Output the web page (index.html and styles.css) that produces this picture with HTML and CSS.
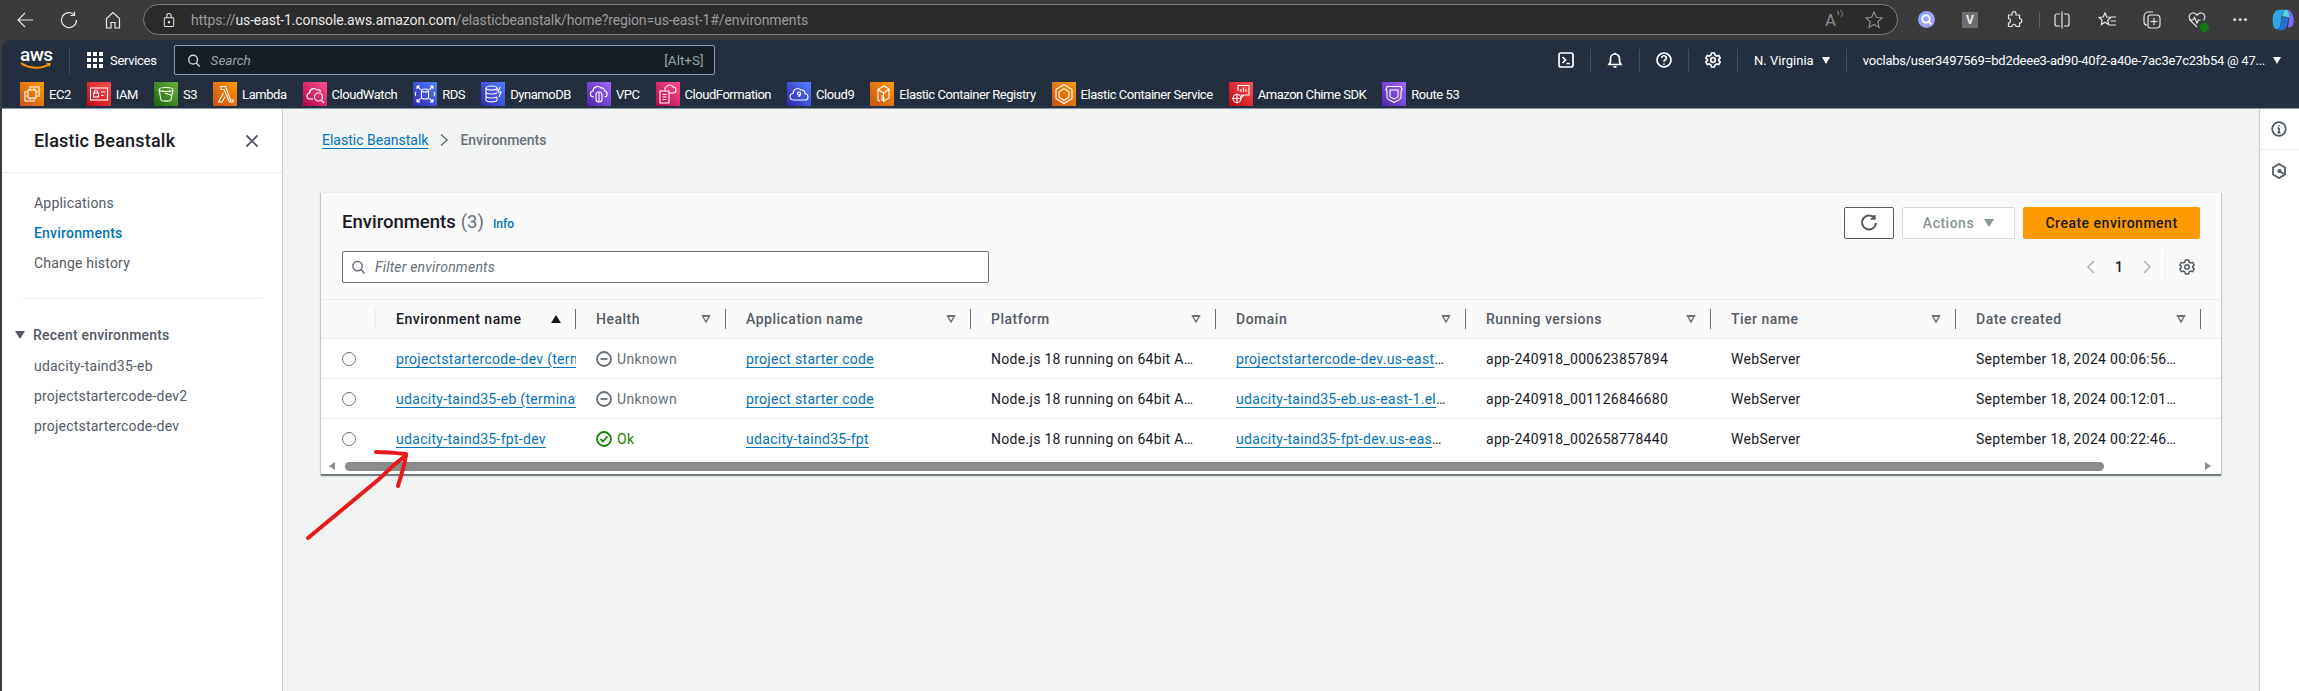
FILE: index.html
```html
<!DOCTYPE html>
<html lang="en">
<head>
  <meta charset="UTF-8">
  <title>Environments | Elastic Beanstalk</title>
  <link rel="stylesheet" href="styles.css">
</head>
<body>
  <!-- browser toolbar -->
  <div class="browser-bar">
    <div class="browser-nav">
      <svg class="b-icon" viewBox="0 0 20 20"><path d="M18 10H3M10 3l-7 7 7 7"/></svg>
      <svg class="b-icon" viewBox="0 0 20 20"><path d="M15.500 5A7.500 7.500 0 1 0 17.500 10M15.500 1.500V5.500H11.500"/></svg>
      <svg class="b-icon" viewBox="0 0 20 20"><path d="M10 2.500 3.500 8.500V18H8v-5.500h4V18h4.500V8.500z"/></svg>
    </div>
    <div class="address-bar">
      <svg class="lock" viewBox="0 0 14 18"><rect x="1.500" y="6.500" width="11" height="10" rx="1"/><path d="M4.500 6.500V4a2.500 2.500 0 0 1 5 0v2.500"/><circle cx="7" cy="11.500" r=".8"/></svg>
      <div class="url">https://<span class="url-host">us-east-1.console.aws.amazon.com</span>/elasticbeanstalk/home?region=us-east-1#/environments</div>
      <span class="read-aloud">A<svg viewBox="0 0 8 10"><path d="M1 1c2 1 2 3 1 4M4 0c3 2 3 5 1 7"/></svg></span>
      <svg class="b-icon dim" viewBox="0 0 20 20"><path d="m10 2 2.400 5.300 5.600.6-4.200 3.800 1.200 5.700L10 14.500l-5 2.900 1.200-5.700L2 7.900l5.600-.6z"/></svg>
    </div>
    <div class="browser-tools">
      <span class="ext-q"><svg viewBox="0 0 16 16"><circle cx="7.500" cy="7.500" r="3.500"/><path d="m10 10 2.500 2.500"/></svg></span>
      <span class="ext-v">V</span>
      <svg class="b-icon" viewBox="0 0 20 20"><path d="M8 3.500c0-2.500 4-2.500 4 0V5h3.500v3.500c3 0 3 4.500 0 4.500v3.500H12c0-3-4-3-4 0H4.500V13c2.500 0 2.500-4.500 0-4.500V5H8z"/></svg>
      <span class="tool-sep"></span>
      <svg class="b-icon" viewBox="0 0 20 20"><path d="M10 1.500v17M8 4H5a2 2 0 0 0-2 2v8a2 2 0 0 0 2 2h3M12 4h3a2 2 0 0 1 2 2v8a2 2 0 0 1-2 2h-3"/></svg>
      <svg class="b-icon" viewBox="0 0 20 20"><path d="m8 3 1.800 4 4 .5-3 2.700.8 4.300L8 12.300 4.400 14.500l.8-4.300-3-2.700 4-.5zM14 7h5M13.500 11H19M12 15h7"/></svg>
      <svg class="b-icon" viewBox="0 0 20 20"><path d="M5 15c-2 0-3-1-3-3V6.500C2 4 4 2 6.500 2H11M6 7.500C6 6 7 5 8.500 5h6C16.500 5 18 6.500 18 8.500v6c0 2-1.500 3.500-3.500 3.500h-6C7 18 6 17 6 15.500zM12 8v7M8.500 11.500h7"/></svg>
      <span class="health">
        <svg class="b-icon" viewBox="0 0 20 20"><path d="M10 17 3.500 10.500C1 8 2 3.500 5.500 3c2-.3 3.500.8 4.500 2.200C11 3.800 12.500 2.700 14.500 3 18 3.500 19 8 16.500 10.500M2 10h4l1.500-2.500L10 13l1.500-3h2"/></svg>
        <span class="health-dot"></span>
      </span>
      <span class="dots">···</span>
      <svg class="copilot" viewBox="0 0 28 28">
        <path d="M3 11c.5-4 3-8 7-8h8c-3 1-5 3-5.500 7L11 20c-.5 3-2.500 4-5 4-2.500-2-3.500-8-3-13z" fill="#2aa8e8"/>
        <path d="M18 3c5 0 7.500 6 7.500 11 0 5-1.500 8-5 8h-1l1-10c.3-3-1-7-2.500-9z" fill="#7a6df0"/>
        <path d="M13 11h7l-1.500 9c-.5 3-3 5-6 5H6c3-.5 5-2.500 5.500-6z" fill="#1f6fd8"/>
        <path d="M13 10c.5-3 2.500-7 5-7 2 2 3 5 2.500 8z" fill="#4fd6e0"/>
      </svg>
    </div>
  </div>

  <!-- aws console navigation -->
  <header class="aws-nav">
    <div class="nav-top">
      <div class="aws-logo">
        <span>aws</span>
        <svg viewBox="0 0 32 8"><path d="M1 1c8 6 20 6 28 1.500" fill="none" stroke="#f90" stroke-width="2"/><path d="M26 1h5l-1.500 4z" fill="#f90"/></svg>
      </div>
      <div class="services">
        <span class="grid-dots"><i></i><i></i><i></i><i></i><i></i><i></i><i></i><i></i><i></i></span>
        Services
      </div>
      <div class="nav-search">
        <svg viewBox="0 0 16 16"><circle cx="7" cy="7" r="5"/><path d="m10.500 10.500 4 4.500"/></svg>
        <em>Search</em>
        <span>[Alt+S]</span>
      </div>
      <div class="nav-right">
        <svg class="nav-icon" viewBox="0 0 16 16"><rect x="1" y="1" width="14" height="14" rx="2"/><path d="m4.500 5 3 3-3 3M8.500 11.500H12"/></svg>
        <span class="nav-sep"></span>
        <svg class="nav-icon" viewBox="0 0 16 16"><path d="M2 12.500h12L12.500 10V6.500a4.500 4.500 0 0 0-9 0V10zM8 .8V2M6.500 14.800h3"/></svg>
        <span class="nav-sep"></span>
        <svg class="nav-icon" viewBox="0 0 16 16"><circle cx="8" cy="8" r="7"/><path d="M5.800 6c0-3 4.500-3 4.500 0 0 1.800-2.300 1.700-2.300 3.800M8 11.500v1.200"/></svg>
        <span class="nav-sep"></span>
        <svg class="nav-icon" viewBox="0 0 16 16"><path d="M6.500 1h3l.5 2 1.700 1 2-.6 1.500 2.600-1.500 1.400v1.200l1.500 1.400-1.500 2.600-2-.6-1.700 1-.5 2h-3l-.5-2-1.700-1-2 .6L.8 10 2.300 8.600V7.400L.8 6l1.500-2.600 2 .6 1.700-1z"/><circle cx="8" cy="8" r="2.300"/></svg>
        <span class="nav-sep"></span>
        <span class="nav-menu">N. Virginia <i class="caret"></i></span>
        <span class="nav-sep"></span>
        <span class="nav-menu nav-user">voclabs/user3497569=bd2deee3-ad90-40f2-a40e-7ac3e7c23b54 @ 47... <i class="caret"></i></span>
      </div>
    </div>
    <div class="shortcuts">
      <a class="shortcut"><span class="svc orange"><svg viewBox="0 0 24 24"><rect x="8" y="8" width="8" height="8"/><path d="M10 6v2M14 6v2M10 16v2M14 16v2M6 10h2M6 14h2M16 10h2M16 14h2M9 5h10v10M5 9v10h10"/></svg></span>EC2</a>
      <a class="shortcut"><span class="svc red"><svg viewBox="0 0 24 24"><rect x="3.500" y="6" width="17" height="12"/><rect x="6.500" y="11" width="5" height="4"/><path d="M7.500 11V9.500a1.500 1.500 0 0 1 3 0V11M14 10h4M14 13.500h2.500"/></svg></span>IAM</a>
      <a class="shortcut"><span class="svc green"><svg viewBox="0 0 24 24"><ellipse cx="12" cy="7.500" rx="7" ry="2"/><path d="M5 7.500 7 18c.3 1.500 9.700 1.500 10 0l2-10.500M11 11l7 2.500"/></svg></span>S3</a>
      <a class="shortcut"><span class="svc orange"><svg viewBox="0 0 24 24"><path d="M8 4.500h4.500l5 13.500H20v2h-3.500L11 7.500H8zM10.500 11 5.500 20H9l3.200-5.500"/></svg></span>Lambda</a>
      <a class="shortcut"><span class="svc pink"><svg viewBox="0 0 24 24"><path d="M10 17H7c-4 0-4-5.500-.5-6 0-4 5-6 7.500-3 1.500-.8 3.500 0 3.500 2M18.500 18.500 21 21"/><circle cx="15.500" cy="15" r="4"/></svg></span>CloudWatch</a>
      <a class="shortcut"><span class="svc blue"><svg viewBox="0 0 24 24"><path d="M4 4l3.500 3.500M20 4l-3.500 3.500M4 20l3.500-3.500M20 20l-3.500-3.500M4 4h3M4 4v3M20 4h-3M20 4v3M4 20h3M4 20v-3M20 20h-3M20 20v-3M3 10c-1 1-1 3 0 4M21 10c1 1 1 3 0 4"/><ellipse cx="12" cy="8.500" rx="3.500" ry="1.500"/><path d="M8.500 8.500v7c0 2 7 2 7 0v-7"/></svg></span>RDS</a>
      <a class="shortcut"><span class="svc blue"><svg viewBox="0 0 24 24"><ellipse cx="10.500" cy="6" rx="5.500" ry="2"/><path d="M5 6v12c0 2.500 11 2.500 11 0v-3M5 10c0 2.500 9 2.500 11 1M5 14c0 2.500 9 2.500 11 1M16 6v3M19 5l-2 5h3l-2 5"/></svg></span>DynamoDB</a>
      <a class="shortcut"><span class="svc purple"><svg viewBox="0 0 24 24"><path d="M7 15c-4.500 0-4.500-5.500-1-6 0-4 5-6 8-3 2-.5 3.500 1 3.500 3 3.500 0 3.500 6 0 6"/><rect x="9" y="10" width="6" height="10" rx="3"/><path d="M12 10v10"/></svg></span>VPC</a>
      <a class="shortcut"><span class="svc pink"><svg viewBox="0 0 24 24"><path d="M4 9h9v12H4zM6.500 12.500h4M6.500 15h4M6.500 17.500h4M9 9V6.500c0-1 1-2 2-2 1-2 5-2 6 .5 2 0 3 1.500 3 3s-1 3-3 3h-4"/></svg></span>CloudFormation</a>
      <a class="shortcut"><span class="svc blue"><svg viewBox="0 0 24 24"><path d="M7 18c-5 0-5-6-1-6.500C6 7 11 5 14 8c3 0 4 1.500 4 3.500 4 .5 4 6.500 0 6.500z"/><circle cx="12" cy="11.500" r="1.500"/><path d="M13.500 11.500c0 2-1 3-2.500 3"/></svg></span>Cloud9</a>
      <a class="shortcut"><span class="svc orange"><svg viewBox="0 0 24 24"><path d="M8 7.500 14 4l5 3v9l-5.500 3.500V11zM8 7.500l5.500 3.500M14 11l5-4M8 7.500V18l2 1.500M12 13v5l3-1.500"/></svg></span>Elastic Container Registry</a>
      <a class="shortcut"><span class="svc orange"><svg viewBox="0 0 24 24"><path d="m12 2.500 8 5v9l-8 5-8-5v-9z"/><path d="m12 6.500 5 3.500v5l-5 3.500L7 15v-5z"/></svg></span>Elastic Container Service</a>
      <a class="shortcut"><span class="svc red"><svg viewBox="0 0 24 24"><path d="M9 9V3.500h11V13h-5l-2 2v-2h-1M12 10V7M14.500 10V5.500M17 10V7"/><circle cx="8" cy="16.500" r="4"/><path d="M3 16.500h10M8 11.500v10"/></svg></span>Amazon Chime SDK</a>
      <a class="shortcut"><span class="svc purple"><svg viewBox="0 0 24 24"><path d="M5 4.500h14l1 3-1 2v6c0 2-4 3-7 5-3-2-7-3-7-5v-6l-1-2z"/><path d="M8 8h8v7l-4 2-4-2z"/></svg></span>Route 53</a>
    </div>
  </header>

  <div class="workspace">
    <nav class="side-nav">
      <div class="side-head">
        <h2>Elastic Beanstalk</h2>
        <svg class="close" viewBox="0 0 14 14"><path d="m1.500 1.500 11 11M12.500 1.500l-11 11"/></svg>
      </div>
      <ul class="side-links">
        <li>Applications</li>
        <li class="active">Environments</li>
        <li>Change history</li>
      </ul>
      <hr class="side-rule">
      <div class="recent-head"><i class="recent-caret"></i>Recent environments</div>
      <ul class="side-links recent-links">
        <li>udacity-taind35-eb</li>
        <li>projectstartercode-dev2</li>
        <li>projectstartercode-dev</li>
      </ul>
    </nav>

    <main class="main">
      <div class="breadcrumb">
        <a>Elastic Beanstalk</a>
        <svg viewBox="0 0 10 14"><path d="m2 1.500 6 5.500-6 5.500"/></svg>
        <span>Environments</span>
      </div>

      <section class="card">
        <div class="card-head">
          <div class="card-title">
            <h1>Environments</h1><span class="count">(3)</span><a class="info">Info</a>
          </div>
          <div class="card-actions">
            <button class="btn btn-icon"><svg viewBox="0 0 16 16"><path d="M12.800 3.500A6.200 6.200 0 1 0 14.200 8M13 .8v3.400H9.600"/></svg></button>
            <button class="btn btn-disabled">Actions <i class="caret"></i></button>
            <button class="btn btn-primary">Create environment</button>
          </div>
        </div>
        <div class="card-filter">
          <div class="filter-box">
            <svg viewBox="0 0 16 16"><circle cx="7" cy="7" r="5"/><path d="m10.500 10.500 4 4.500"/></svg>
            <em>Filter environments</em>
          </div>
          <div class="pager">
            <svg class="pager-arrow" viewBox="0 0 10 14"><path d="M8 1 2 7l6 6"/></svg>
            <b>1</b>
            <svg class="pager-arrow" viewBox="0 0 10 14"><path d="m2 1 6 6-6 6"/></svg>
            <span class="pager-sep"></span>
            <svg class="pager-gear" viewBox="0 0 16 16"><path d="M6.500 1h3l.5 2 1.700 1 2-.6 1.500 2.600-1.500 1.400v1.200l1.500 1.400-1.500 2.600-2-.6-1.700 1-.5 2h-3l-.5-2-1.700-1-2 .6L.8 10 2.300 8.600V7.400L.8 6l1.500-2.600 2 .6 1.700-1z"/><circle cx="8" cy="8" r="2.300"/></svg>
          </div>
        </div>

        <table class="env-table">
          <colgroup>
            <col class="c-radio"><col class="c-name"><col class="c-health"><col class="c-wide"><col class="c-wide"><col class="c-domain"><col class="c-wide"><col class="c-wide"><col class="c-wide"><col class="c-end">
          </colgroup>
          <thead>
            <tr>
              <th class="th-radio"><span class="th-in"></span></th>
              <th class="sorted"><span class="th-in">Environment name <i class="sort-up"></i></span></th>
              <th><span class="th-in">Health <i class="sort-down"></i></span></th>
              <th><span class="th-in">Application name <i class="sort-down"></i></span></th>
              <th><span class="th-in">Platform <i class="sort-down"></i></span></th>
              <th><span class="th-in">Domain <i class="sort-down"></i></span></th>
              <th><span class="th-in">Running versions <i class="sort-down"></i></span></th>
              <th><span class="th-in">Tier name <i class="sort-down"></i></span></th>
              <th><span class="th-in">Date created <i class="sort-down"></i></span></th>
              <th></th>
            </tr>
          </thead>
          <tbody>
            <tr>
              <td class="td-radio"><span class="radio"></span></td>
              <td class="td-clip"><a>projectstartercode-dev (terminated)</a></td>
              <td><span class="status unknown"><svg viewBox="0 0 16 16"><circle cx="8" cy="8" r="7"/><path d="M4.500 8h7"/></svg>Unknown</span></td>
              <td><a>project starter code</a></td>
              <td class="td-pad">Node.js 18 running on 64bit Amazon Linux</td>
              <td class="td-pad"><a>projectstartercode-dev.us-east-1.elasticbeanstalk.com</a></td>
              <td>app-240918_000623857894</td>
              <td>WebServer</td>
              <td class="td-date">September 18, 2024 00:06:56 (UTC+7)</td>
              <td></td>
            </tr>
            <tr>
              <td class="td-radio"><span class="radio"></span></td>
              <td class="td-clip"><a>udacity-taind35-eb (terminated)</a></td>
              <td><span class="status unknown"><svg viewBox="0 0 16 16"><circle cx="8" cy="8" r="7"/><path d="M4.500 8h7"/></svg>Unknown</span></td>
              <td><a>project starter code</a></td>
              <td class="td-pad">Node.js 18 running on 64bit Amazon Linux</td>
              <td class="td-pad"><a>udacity-taind35-eb.us-east-1.elasticbeanstalk.com</a></td>
              <td>app-240918_001126846680</td>
              <td>WebServer</td>
              <td class="td-date">September 18, 2024 00:12:01 (UTC+7)</td>
              <td></td>
            </tr>
            <tr>
              <td class="td-radio"><span class="radio"></span></td>
              <td class="td-clip"><a>udacity-taind35-fpt-dev</a></td>
              <td><span class="status ok"><svg viewBox="0 0 16 16"><circle cx="8" cy="8" r="7"/><path d="m4.500 8 2.500 2.500 4.500-5"/></svg>Ok</span></td>
              <td><a>udacity-taind35-fpt</a></td>
              <td class="td-pad">Node.js 18 running on 64bit Amazon Linux</td>
              <td class="td-pad"><a>udacity-taind35-fpt-dev.us-east-1.elasticbeanstalk.com</a></td>
              <td>app-240918_002658778440</td>
              <td>WebServer</td>
              <td class="td-date">September 18, 2024 00:22:46 (UTC+7)</td>
              <td></td>
            </tr>
          </tbody>
        </table>

        <div class="scrollbar">
          <i class="scroll-left"></i>
          <span class="scroll-thumb"></span>
          <i class="scroll-right"></i>
        </div>
      </section>
    </main>

    <aside class="rail">
      <div class="rail-item">
        <svg viewBox="0 0 16 16"><circle cx="8" cy="8" r="6.800"/><path d="M8 7v4.500M6.500 11.500h3M6.500 7H8M8 4v1.200"/></svg>
      </div>
      <div class="rail-item">
        <svg viewBox="0 0 16 16"><path d="M8 1 14 4.500v7L8 15l-6-3.500v-7z"/><path d="M8 8l5 3M8 8h2"/><circle cx="8.500" cy="8" r="1.200"/></svg>
      </div>
    </aside>
  </div>

  <!-- red annotation arrow drawn on top of the screenshot -->
  <svg class="annotation" viewBox="0 0 120 100">
    <path d="M8 91 78 33 C90 22 97 14 106 9 M76 5 C86 5 96 6 106 7 C105 18 101 28 98 39"/>
  </svg>
</body>
</html>
```

FILE: styles.css
```css
* {
  box-sizing: border-box;
}
body {
  margin: 0;
  width: 2299px;
  height: 691px;
  overflow: hidden;
  position: relative;
  display: flex;
  flex-direction: column;
  font-family: Roboto, "Liberation Sans", sans-serif;
  font-size: 14px;
  color: #16191f;
  background-color: #3b3b3b;
}
svg {
  display: block;
  flex: none;
}
a {
  color: #0073bb;
}
ul {
  list-style: none;
  margin: 0;
  padding: 0;
}

/* browser toolbar */
.browser-bar {
  height: 40px;
  flex: none;
  display: flex;
  align-items: center;
  padding-bottom: 1px;
}
.browser-nav {
  width: 143px;
  flex: none;
  padding-left: 15px;
  display: flex;
  gap: 24px;
}
.b-icon {
  width: 20px;
  height: 20px;
  fill: none;
  stroke: #e6e6e6;
  stroke-width: 1.2;
}
.b-icon.dim {
  stroke: #8c8c8c;
}
.address-bar {
  width: 1755px;
  height: 31px;
  flex: none;
  display: flex;
  align-items: center;
  background-color: #2b2b2b;
  border: 1px solid #7b7b7b;
  border-radius: 16px;
  padding-left: 19px;
  padding-right: 13px;
}
.lock {
  width: 12px;
  height: 16px;
  fill: none;
  stroke: #e0e0e0;
  stroke-width: 1.2;
}
.url {
  margin-left: 16px;
  flex: 1;
  font-size: 14px;
  letter-spacing: -0.12px;
  color: #9a9a9a;
}
.url-host {
  color: #e8e8e8;
}
.read-aloud {
  display: flex;
  color: #8c8c8c;
  font-size: 17px;
  margin-right: 20px;
}
.read-aloud svg {
  width: 8px;
  height: 10px;
  fill: none;
  stroke: #8c8c8c;
}
.browser-tools {
  flex: none;
  display: flex;
  align-items: center;
  padding-left: 20px;
  gap: 25px;
  color: #e6e6e6;
}
.ext-q {
  width: 17px;
  height: 17px;
  border-radius: 50%;
  background: linear-gradient(135deg, #7fa8f5, #b59cf0);
  margin-right: 2px;
}
.ext-q svg {
  width: 17px;
  height: 17px;
  fill: none;
  stroke: #fff;
  stroke-width: 1.800;
}
.ext-v {
  width: 16px;
  height: 16px;
  background-color: #6e6e6e;
  border-radius: 1px;
  font-size: 12px;
  font-weight: 700;
  text-align: center;
  line-height: 16px;
  margin-right: 1px;
}
.tool-sep {
  width: 1px;
  height: 16px;
  background-color: #5e5e5e;
  margin: 0 -13px 0 -10px;
}
.health {
  position: relative;
}
.health-dot {
  position: absolute;
  right: -2px;
  bottom: -2px;
  width: 9px;
  height: 9px;
  border-radius: 50%;
  background-color: #107c10;
}
.dots {
  width: 16px;
  font-size: 18px;
  font-weight: 700;
  text-align: center;
  line-height: 20px;
}
.copilot {
  width: 26px;
  height: 26px;
  margin-left: -3px;
}

/* aws top navigation */
.aws-nav {
  height: 69px;
  flex: none;
  background-color: #232f3e;
  border-top-left-radius: 8px;
  margin-left: 2px;
  color: #fff;
  border-bottom: 1px solid #8a96a3;
}
.nav-top {
  height: 40px;
  display: flex;
  align-items: center;
}
.aws-logo {
  width: 49px;
  margin-left: 18px;
  padding-bottom: 3px;
}
.aws-logo span {
  display: block;
  font-size: 19px;
  line-height: 15px;
  font-weight: 500;
  letter-spacing: -0.5px;
}
.aws-logo svg {
  width: 32px;
  height: 8px;
}
.services {
  display: flex;
  align-items: center;
  gap: 7px;
  height: 27px;
  font-size: 13px;
  letter-spacing: -0.3px;
  padding-left: 17px;
  border-left: 1px solid #3f4b5b;
}
.grid-dots {
  display: grid;
  grid-template-columns: repeat(3, 4px);
  grid-auto-rows: 4px;
  gap: 2px;
}
.grid-dots i {
  background-color: #fff;
}
.nav-search {
  width: 541px;
  height: 30px;
  margin-left: 17px;
  display: flex;
  align-items: center;
  padding: 0 10px 0 12px;
  background-color: #161d26;
  border: 1px solid #8d99a8;
  border-radius: 2px;
  font-size: 13.500px;
  color: #95a5a6;
}
.nav-search svg {
  width: 14px;
  height: 15px;
  fill: none;
  stroke: #d5dbdb;
  stroke-width: 1.600;
}
.nav-search em {
  flex: 1;
  margin-left: 10px;
}
.nav-right {
  margin-left: auto;
  display: flex;
  align-items: center;
  padding-right: 18px;
  font-size: 13px;
}
.nav-icon {
  width: 16px;
  height: 16px;
  fill: none;
  stroke: #fff;
  stroke-width: 1.700;
}
.nav-sep {
  width: 1px;
  height: 23px;
  background-color: #414d5c;
  margin: 0 16px;
}
.nav-menu {
  display: flex;
  align-items: center;
  gap: 5px;
  white-space: pre;
}
.nav-user {
  letter-spacing: -0.25px;
}
.caret {
  display: inline-block;
  width: 0;
  height: 0;
  border-left: 4.500px solid transparent;
  border-right: 4.500px solid transparent;
  border-top: 7px solid currentColor;
}

/* favourite services row */
.shortcuts {
  display: flex;
  align-items: center;
  height: 24px;
  margin-top: 2px;
  padding-left: 18px;
  gap: 16px;
}
.shortcut {
  display: flex;
  align-items: center;
  gap: 5px;
  color: #fff;
  font-size: 13px;
  letter-spacing: -0.45px;
  white-space: nowrap;
}
.svc {
  width: 24px;
  height: 24px;
  flex: none;
}
.svc svg {
  width: 24px;
  height: 24px;
  fill: none;
  stroke: #fff;
  stroke-width: 1.100;
}
.orange {
  background: linear-gradient(45deg, #c8511b, #f90);
}
.red {
  background: linear-gradient(45deg, #bd0816, #ff5252);
}
.green {
  background: linear-gradient(45deg, #1b660f, #6cae3e);
}
.pink {
  background: linear-gradient(45deg, #b0084d, #ff4f8b);
}
.blue {
  background: linear-gradient(45deg, #2e27ad, #527fff);
}
.purple {
  background: linear-gradient(45deg, #4d27a8, #a166ff);
}

/* page below the header */
.workspace {
  flex: 1;
  display: flex;
  margin-left: 2px;
  min-height: 0;
}
.side-nav {
  width: 281px;
  flex: none;
  background-color: #fff;
  border-right: 1px solid #c6cccc;
  color: #545b64;
  letter-spacing: 0.2px;
}
.side-head {
  height: 64px;
  display: flex;
  align-items: center;
  justify-content: space-between;
  padding: 0 23px 0 32px;
  border-bottom: 1px solid #eaeded;
}
.side-head h2 {
  margin: 0;
  font-size: 18px;
  font-weight: 500;
  color: #16191f;
}
.close {
  width: 14px;
  height: 14px;
  fill: none;
  stroke: #545b64;
  stroke-width: 1.800;
}
.side-links {
  padding: 15px 0 0 32px;
}
.side-links li {
  height: 30px;
  line-height: 30px;
}
.side-links .active {
  color: #0073bb;
  font-weight: 500;
}
.side-rule {
  margin: 20px 20px 0;
  border: none;
  border-top: 1px solid #eaeded;
}
.recent-head {
  display: flex;
  align-items: center;
  margin: 28px 0 0 13px;
  height: 16px;
  font-weight: 500;
  gap: 8px;
}
.recent-caret {
  width: 0;
  height: 0;
  border-left: 5px solid transparent;
  border-right: 5px solid transparent;
  border-top: 8px solid #545b64;
}
.recent-links {
  padding-top: 8px;
}

.main {
  flex: 1;
  min-width: 0;
  background-color: #f2f3f3;
  padding: 0 38px;
}
.breadcrumb {
  height: 64px;
  padding-bottom: 2px;
  padding-left: 1px;
  display: flex;
  align-items: center;
  color: #687078;
  font-weight: 500;
}
.breadcrumb a {
  font-weight: 400;
  text-decoration: underline;
  text-underline-offset: 3px;
}
.breadcrumb svg {
  width: 10px;
  height: 14px;
  margin: 0 11px;
  fill: none;
  stroke: #687078;
  stroke-width: 1.600;
}

/* environments card */
.card {
  width: 1900px;
  margin-top: 19px;
  background-color: #fafafa;
  box-shadow: 0 1px 1px 0 rgba(0, 28, 36, 0.3), 1px 1px 1px 0 rgba(0, 28, 36, 0.15), -1px 1px 1px 0 rgba(0, 28, 36, 0.15);
  border-top: 1px solid #eaeded;
}
.card-head {
  height: 58px;
  padding: 14px 21px 0 21px;
  display: flex;
  justify-content: space-between;
}
.card-title {
  display: flex;
  align-items: baseline;
  padding-top: 4px;
}
.card-title h1 {
  margin: 0;
  font-size: 18.500px;
  font-weight: 500;
}
.count {
  margin-left: 5px;
  font-size: 18.500px;
  color: #687078;
}
.info {
  margin-left: 9px;
  font-size: 12px;
  font-weight: 500;
}
.card-actions {
  display: flex;
  gap: 8px;
}
.btn {
  height: 32px;
  border-radius: 2px;
  font-family: inherit;
  font-size: 14px;
  font-weight: 500;
  letter-spacing: 0.5px;
  display: flex;
  align-items: center;
  justify-content: center;
}
.btn-icon {
  width: 50px;
  background-color: #fff;
  border: 1px solid #545b64;
}
.btn-icon svg {
  width: 18px;
  height: 18px;
  fill: none;
  stroke: #545b64;
  stroke-width: 1.800;
}
.btn-disabled {
  width: 113px;
  gap: 10px;
  background-color: #fff;
  border: 1px solid #d5dbdb;
  color: #879596;
}
.btn-disabled .caret {
  border-left-width: 5px;
  border-right-width: 5px;
  border-top-width: 8px;
}
.btn-primary {
  width: 177px;
  background-color: #ff9900;
  border: none;
  color: #16191f;
}
.card-filter {
  height: 48px;
  padding: 0 21px;
  display: flex;
  justify-content: space-between;
}
.filter-box {
  width: 647px;
  height: 32px;
  display: flex;
  align-items: center;
  gap: 9px;
  padding-left: 8px;
  background-color: #fff;
  border: 1px solid #687078;
  border-radius: 2px;
  color: #687078;
  letter-spacing: 0.2px;
}
.filter-box svg {
  width: 15px;
  height: 16px;
  fill: none;
  stroke: #687078;
  stroke-width: 1.600;
}
.pager {
  display: flex;
  align-items: center;
  height: 32px;
}
.pager b {
  margin: 0 19px;
  width: 8px;
  text-align: center;
  font-weight: 500;
}
.pager-arrow {
  width: 10px;
  height: 14px;
  fill: none;
  stroke: #aab7b8;
  stroke-width: 1.600;
}
.pager-sep {
  width: 1px;
  height: 32px;
  background-color: #eaeded;
  margin: 0 13px;
}
.pager-gear {
  width: 16px;
  height: 16px;
  fill: none;
  stroke: #545b64;
  stroke-width: 1.500;
  margin-right: 5px;
}

/* table */
.env-table {
  width: 1900px;
  table-layout: fixed;
  border-collapse: collapse;
  background-color: #fff;
}
.c-radio { width: 55px; }
.c-name { width: 200px; }
.c-health { width: 150px; }
.c-wide { width: 245px; }
.c-domain { width: 250px; }
.c-end { width: 20px; }
th {
  height: 39px;
  padding: 0;
  background-color: #fafafa;
  border-top: 1px solid #eaeded;
  border-bottom: 1px solid #eaeded;
  text-align: left;
  font-weight: 500;
  letter-spacing: 0.5px;
  color: #545b64;
}
.th-in {
  display: flex;
  align-items: center;
  justify-content: space-between;
  height: 20px;
  padding: 0 14px 0 20px;
  border-right: 1px solid #687078;
}
.th-radio .th-in {
  border-right-color: #eaeded;
}
.sorted {
  color: #16191f;
}
.sort-up {
  width: 0;
  height: 0;
  border-left: 5px solid transparent;
  border-right: 5px solid transparent;
  border-bottom: 8px solid #16191f;
}
.sort-down {
  width: 10px;
  height: 9px;
  clip-path: polygon(0 0, 100% 0, 50% 100%);
  background-color: #687078;
  position: relative;
}
.sort-down::after {
  content: "";
  position: absolute;
  left: 2.500px;
  top: 2px;
  width: 5px;
  height: 4px;
  clip-path: polygon(0 0, 100% 0, 50% 100%);
  background-color: #fafafa;
}
td {
  height: 40px;
  padding: 0 0 0 20px;
  border-bottom: 1px solid #eaeded;
  letter-spacing: 0.3px;
  white-space: nowrap;
  overflow: hidden;
  text-overflow: ellipsis;
}
tbody tr:last-child td {
  border-bottom: none;
}
.td-clip {
  text-overflow: clip;
}
.td-pad {
  padding-right: 20px;
}
.td-date {
  padding-right: 24px;
}
td a {
  text-decoration: underline;
  text-underline-offset: 3px;
}
.td-radio {
  padding-left: 21px;
}
.radio {
  display: block;
  width: 14px;
  height: 14px;
  border: 1px solid #687078;
  border-radius: 50%;
}
.status {
  display: flex;
  align-items: center;
  gap: 5px;
}
.status svg {
  width: 16px;
  height: 16px;
  fill: none;
  stroke: currentColor;
  stroke-width: 1.800;
}
.unknown {
  color: #687078;
}
.ok {
  color: #1d8102;
}

/* horizontal scrollbar */
.scrollbar {
  height: 16px;
  display: flex;
  align-items: center;
  padding: 0 10px 0 8px;
  background-color: #fff;
  border-bottom: 1px solid #687078;
}
.scroll-left,
.scroll-right {
  width: 0;
  height: 0;
  border-top: 4px solid transparent;
  border-bottom: 4px solid transparent;
}
.scroll-left {
  border-right: 6px solid #8c8c8c;
}
.scroll-right {
  border-left: 6px solid #8c8c8c;
  margin-left: auto;
}
.scroll-thumb {
  width: 1759px;
  height: 9px;
  margin-left: 10px;
  background-color: #8c8c8c;
  border-radius: 5px;
}

/* right rail */
.rail {
  width: 40px;
  flex: none;
  background-color: #fff;
  border-left: 1px solid #c6cccc;
}
.rail-item {
  height: 41px;
  padding-left: 11px;
  display: flex;
  align-items: center;
  border-bottom: 1px solid #eaeded;
}
.rail-item + .rail-item {
  border-bottom: none;
}
.rail-item svg {
  width: 16px;
  height: 16px;
  fill: none;
  stroke: #545b64;
  stroke-width: 1.800;
}

/* annotation */
.annotation {
  position: absolute;
  left: 300px;
  top: 447px;
  width: 120px;
  height: 100px;
  fill: none;
  stroke: #e8191c;
  stroke-width: 4;
  stroke-linecap: round;
  stroke-linejoin: round;
}
```
